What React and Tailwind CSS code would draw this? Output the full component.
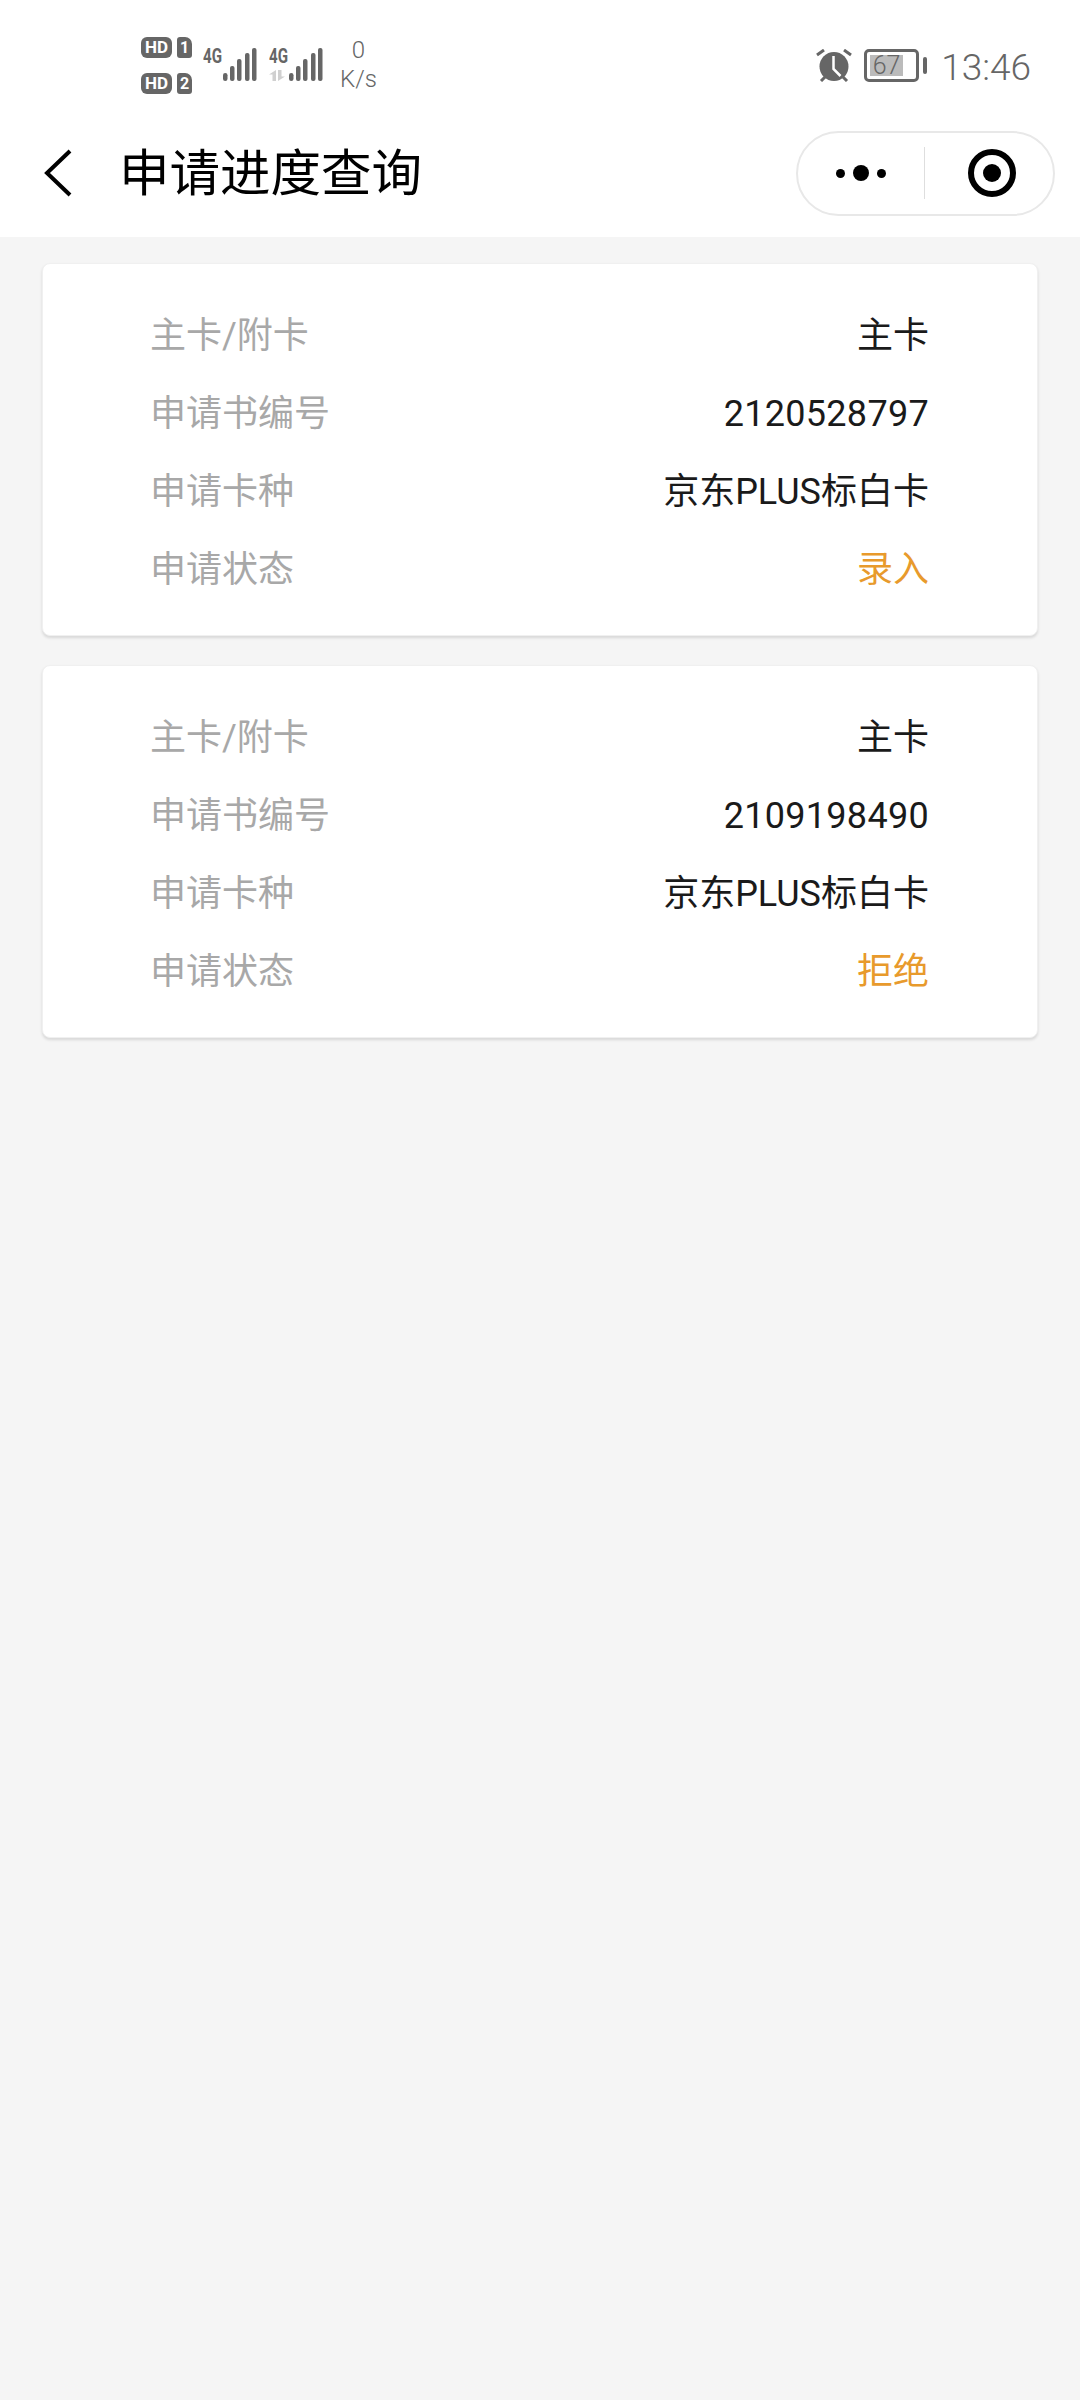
const cards = [
  { number: "2120528797", status: "录入" },
  { number: "2109198490", status: "拒绝" },
];

function Bars({ arrows }) {
  return (
    <svg width="55" height="34" viewBox="0 0 55 34" className="block">
      <text x="0" y="15" fontSize="20" fontWeight="700" fill="#666" fontFamily="Roboto, sans-serif" textLength="19" lengthAdjust="spacingAndGlyphs">4G</text>
      {arrows && (
        <g fill="#d0d0d0">
          <path d="M7 22v11H3.500v-6.500H0z" />
          <path d="M9 33V22h3.500v6.500H16z" />
        </g>
      )}
      <g fill="#666">
        <rect x="20" y="25" width="4.500" height="8" rx="2.200" />
        <rect x="27" y="18" width="4.500" height="15" rx="2" />
        <rect x="34" y="11" width="4.500" height="22" rx="2" />
        <rect x="42" y="5" width="4.500" height="28" rx="2" />
        <rect x="49" y="0" width="4.500" height="33" rx="2" />
      </g>
    </svg>
  );
}

function SimBadge({ n }) {
  return (
    <div className="flex items-center gap-[5px]">
      <span className="flex h-[21px] w-[31px] items-center justify-center rounded-[6px] bg-[#666] text-[17px] font-bold leading-[21px] text-white">HD</span>
      <span className="flex h-[21px] w-[15px] items-center justify-center rounded-[3px] rounded-tr-[7px] bg-[#666] text-[16px] font-bold leading-[21px] text-white">{n}</span>
    </div>
  );
}

function AlarmIcon() {
  return (
    <svg width="36" height="33" viewBox="0 0 36 33" className="block">
      <circle cx="18" cy="17.500" r="14.500" fill="#666" />
      <path d="M17.500 7v13l7 7" stroke="#fff" strokeWidth="2.500" fill="none" />
      <path d="M1 6l7-5M35 6l-7-5M9 28l-4 4M27 28l4 4" stroke="#666" strokeWidth="3" fill="none" />
    </svg>
  );
}

function StatusBar() {
  return (
    <div className="flex h-[100px] items-center justify-between pl-[141px] pr-[49px] pt-[30px] text-[#666]">
      <div className="flex items-center">
        <div className="mt-[1px] flex flex-col gap-[15px]">
          <SimBadge n="1" />
          <SimBadge n="2" />
        </div>
        <div className="ml-[11px] flex items-center gap-[11px]">
          <Bars />
          <Bars arrows />
        </div>
        <div className="ml-[16px] flex flex-col items-center text-[24px] font-light leading-[29px]">
          <span>0</span>
          <span>K/s</span>
        </div>
      </div>
      <div className="flex items-center">
        <AlarmIcon />
        <div className="ml-[12px] flex items-center">
          <div className="flex h-[33px] w-[55px] items-center rounded-[5px] border-[3px] border-[#666] p-[3px]">
            <div className="flex h-full w-[33px] items-center justify-center bg-[#bbb] text-[25px] font-light leading-none">67</div>
          </div>
          <div className="ml-[4px] h-[17px] w-[4px] rounded-[2px] bg-[#666]" />
        </div>
        <span className="ml-[14px] pt-[4px] text-[37px] font-light leading-none">13:46</span>
      </div>
    </div>
  );
}

function NavBar() {
  return (
    <div className="flex h-[137px] items-center bg-white pt-[9px]">
      <svg width="30" height="50" viewBox="0 0 30 50" className="ml-[43px] block">
        <path d="M27 3L4 25l23 22" stroke="#000" strokeWidth="4" fill="none" />
      </svg>
      <h1 className="ml-[46px] pt-[2px] text-[50.500px] font-normal leading-[50px] text-black">申请进度查询</h1>
      <div className="ml-auto mr-[25px] flex h-[85px] w-[259px] items-center rounded-full border-2 border-[#e8e8e8] bg-white">
        <div className="flex h-[52px] w-[127px] items-center justify-center gap-[8px] border-r border-[#dedede]">
          <span className="h-[9px] w-[9px] rounded-full bg-black" />
          <span className="h-[16px] w-[16px] rounded-full bg-black" />
          <span className="h-[9px] w-[9px] rounded-full bg-black" />
        </div>
        <div className="flex flex-1 items-center justify-center pl-[6px]">
          <div className="flex h-[48px] w-[48px] items-center justify-center rounded-full border-[6px] border-black">
            <span className="h-[18px] w-[18px] rounded-full bg-black" />
          </div>
        </div>
      </div>
    </div>
  );
}

function Row({ label, value, valueClass = "text-[#1a1a1a]" }) {
  return (
    <div className="flex h-[78px] items-center justify-between">
      <span className="text-[#a8a8a8]">{label}</span>
      <span className={valueClass}>{value}</span>
    </div>
  );
}

function Card({ number, status }) {
  return (
    <div className="rounded-[8px] border border-[#f0f0f0] bg-white pb-[26px] pl-[107px] pr-[108px] pt-[33px] text-[36px] leading-none shadow-[0_2px_3px_rgba(0,0,0,0.12)]">
      <Row label="主卡/附卡" value="主卡" />
      <Row label="申请书编号" value={number} valueClass="tracking-[0.3px] text-[#1a1a1a]" />
      <Row label="申请卡种" value="京东PLUS标白卡" />
      <Row label="申请状态" value={status} valueClass="text-[#e89a2c]" />
    </div>
  );
}

export default function App() {
  return (
    <div
      className="flex h-[2400px] flex-col bg-[#f5f5f5]"
      style={{ fontFamily: '"Roboto", "Noto Sans CJK SC", sans-serif' }}
    >
      <div className="bg-white">
        <StatusBar />
        <NavBar />
      </div>
      <div className="flex flex-col gap-[29px] px-[42px] pt-[26px]">
        {cards.map((card) => (
          <Card key={card.number} {...card} />
        ))}
      </div>
    </div>
  );
}
